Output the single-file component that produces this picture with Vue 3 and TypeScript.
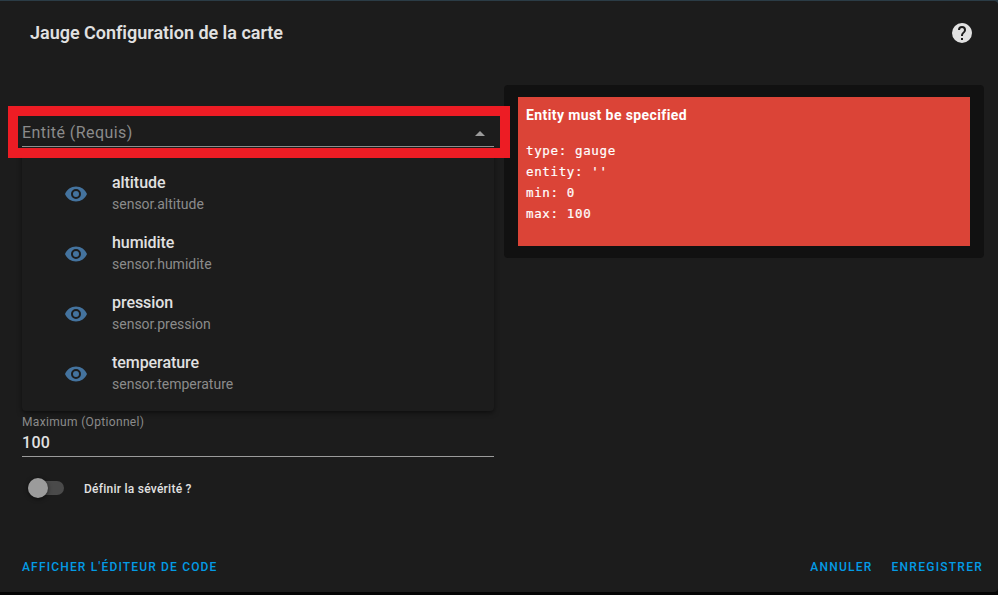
<script setup lang="ts">
interface Entity {
  name: string
  id: string
}

const entities: Entity[] = [
  { name: 'altitude', id: 'sensor.altitude' },
  { name: 'humidite', id: 'sensor.humidite' },
  { name: 'pression', id: 'sensor.pression' },
  { name: 'temperature', id: 'sensor.temperature' },
]

const config = ["type: gauge", "entity: ''", 'min: 0', 'max: 100'].join('\n')
</script>

<template>
  <div class="backdrop">
    <section class="dialog">
      <header class="header">
        <h1 class="title">Jauge Configuration de la carte</h1>
        <svg class="help" viewBox="0 0 24 24">
          <path d="M15.07,11.25L14.17,12.17C13.45,12.89 13,13.5 13,15H11V14.5C11,13.39 11.45,12.39 12.17,11.67L13.41,10.41C13.78,10.05 14,9.55 14,9C14,7.89 13.1,7 12,7A2,2 0 0,0 10,9H8A4,4 0 0,1 12,5A4,4 0 0,1 16,9C16,9.88 15.64,10.67 15.07,11.25M13,19H11V17H13M12,2A10,10 0 0,0 2,12A10,10 0 0,0 12,22A10,10 0 0,0 22,12C22,6.47 17.5,2 12,2Z" />
        </svg>
      </header>

      <main class="content">
        <div class="editor">
          <div class="picker">
            <div class="field entity">
              <span class="placeholder">Entité (Requis)</span>
              <svg class="caret" viewBox="0 0 10 5"><path d="M0 5L5 0L10 5Z" /></svg>
            </div>
            <ul class="menu">
              <li v-for="entity in entities" :key="entity.id" class="item">
                <svg class="eye" viewBox="0 0 24 24">
                  <path d="M12,9A3,3 0 0,0 9,12A3,3 0 0,0 12,15A3,3 0 0,0 15,12A3,3 0 0,0 12,9M12,17A5,5 0 0,1 7,12A5,5 0 0,1 12,7A5,5 0 0,1 17,12A5,5 0 0,1 12,17M12,4.5C7,4.5 2.73,7.61 1,12C2.73,16.39 7,19.5 12,19.5C17,19.5 21.27,16.39 23,12C21.27,7.61 17,4.5 12,4.5Z" />
                </svg>
                <div class="item-text">
                  <span class="name">{{ entity.name }}</span>
                  <span class="id">{{ entity.id }}</span>
                </div>
              </li>
            </ul>
            <div class="highlight"></div>
          </div>

          <div class="maximum">
            <label class="label">Maximum (Optionnel)</label>
            <div class="field value">100</div>
          </div>

          <div class="severity">
            <span class="switch"><span class="knob"></span></span>
            <span class="severity-label">Définir la sévérité ?</span>
          </div>
        </div>

        <div class="preview">
          <div class="error">
            <p class="error-title">Entity must be specified</p>
            <pre class="error-config">{{ config }}</pre>
          </div>
        </div>
      </main>

      <footer class="footer">
        <button class="action">Afficher l'éditeur de code</button>
        <div class="actions">
          <button class="action">Annuler</button>
          <button class="action">Enregistrer</button>
        </div>
      </footer>
    </section>
  </div>
</template>

<style>
body {
  background: #050505;
}
</style>

<style scoped>
.backdrop {
  box-sizing: border-box;
  height: 595px;
  padding: 1px 0 3px;
  overflow: hidden;
  background: linear-gradient(#2b3c46 0 3px, #050505 6px);
  font-family: Roboto, sans-serif;
  color: #e1e1e1;
}
.dialog {
  display: flex;
  flex-direction: column;
  height: 591px;
  background: #1c1c1c;
  border-radius: 0 4px 4px 0;
}
.header {
  display: flex;
  align-items: center;
  justify-content: space-between;
  height: 64px;
  padding: 0 24px 0 30px;
}
.title {
  margin: 0;
  font-size: 18px;
  font-weight: 600;
  letter-spacing: -0.02px;
  line-height: 28px;
}
.help {
  width: 24px;
  height: 24px;
  fill: #e1e1e1;
}
.content {
  display: grid;
  grid-template-columns: 472px 480px;
  column-gap: 10px;
  align-items: start;
  padding: 20px 14px 0 22px;
  flex: 1;
}
.picker {
  position: relative;
  padding-top: 37px;
}
.field {
  box-sizing: border-box;
  height: 25px;
  border-bottom: 1px solid #9b9b9b;
  font-size: 16px;
  line-height: 24px;
}
.entity {
  display: flex;
  align-items: center;
  justify-content: space-between;
  padding-right: 9px;
  color: #8b8b8b;
}
.placeholder {
  margin-top: -2px;
  letter-spacing: 0.44px;
}
.caret {
  width: 10px;
  height: 5px;
  margin-top: -2px;
  fill: #9b9b9b;
}
.menu {
  position: absolute;
  top: 62px;
  left: 0;
  box-sizing: border-box;
  width: 472px;
  height: 264px;
  margin: 0;
  padding: 17px 0 7px;
  list-style: none;
  background: #1c1c1c;
  border-radius: 0 0 4px 4px;
  box-shadow: 0 2px 5px rgba(0, 0, 0, 0.5);
  z-index: 1;
}
.item {
  display: flex;
  align-items: center;
  height: 60px;
  padding-left: 42px;
}
.eye {
  width: 24px;
  height: 24px;
  margin-right: 24px;
  fill: #44739e;
}
.item-text {
  display: flex;
  flex-direction: column;
  padding-bottom: 2px;
}
.name {
  font-size: 16px;
  font-weight: 500;
  letter-spacing: -0.06px;
  line-height: 22px;
}
.id {
  font-size: 14px;
  line-height: 20px;
  color: #8b8b8b;
}
.highlight {
  position: absolute;
  top: 21px;
  left: -14px;
  box-sizing: border-box;
  width: 502px;
  height: 52px;
  border: 10px solid #ed1c24;
  z-index: 2;
}
.maximum {
  padding-top: 265px;
}
.label {
  display: block;
  font-size: 12px;
  line-height: 20px;
  letter-spacing: 0.33px;
  color: #8b8b8b;
}
.value {
  font-weight: 500;
  letter-spacing: 0.3px;
  line-height: 22px;
}
.severity {
  display: flex;
  align-items: center;
  height: 24px;
  margin-top: 19px;
  padding-left: 6px;
}
.switch {
  display: flex;
  align-items: center;
  width: 36px;
  height: 14px;
  border-radius: 7px;
  background: #4a4a4a;
}
.knob {
  width: 20px;
  height: 20px;
  border-radius: 50%;
  background: #9b9b9b;
  box-shadow: 0 1px 4px rgba(0, 0, 0, 0.6);
}
.severity-label {
  margin-left: 20px;
  padding-top: 2px;
  font-size: 12px;
  font-weight: 500;
  letter-spacing: 0.25px;
}
.preview {
  box-sizing: border-box;
  height: 173px;
  padding: 12px 14px;
  border-radius: 4px;
  background: #111;
}
.error {
  box-sizing: border-box;
  height: 149px;
  padding: 8px;
  background: #db4437;
  color: #fff;
}
.error-title {
  margin: 0;
  font-size: 14px;
  font-weight: 700;
  letter-spacing: 0.4px;
  line-height: 20px;
}
.error-config {
  margin: 15px 0 0;
  font-family: "DejaVu Sans Mono", monospace;
  font-size: 12.5px;
  letter-spacing: 0.64px;
  line-height: 21px;
  -webkit-text-stroke: 0.2px #fff;
}
.footer {
  display: flex;
  justify-content: space-between;
  align-items: center;
  height: 50px;
  padding: 0 15px 0 22px;
}
.actions {
  display: flex;
  gap: 19px;
}
.action {
  padding: 0;
  border: 0;
  background: none;
  color: #039be5;
  font-family: inherit;
  font-size: 12px;
  font-weight: 500;
  letter-spacing: 1.16px;
  text-transform: uppercase;
}
.actions .action {
  letter-spacing: 1.25px;
}
</style>
